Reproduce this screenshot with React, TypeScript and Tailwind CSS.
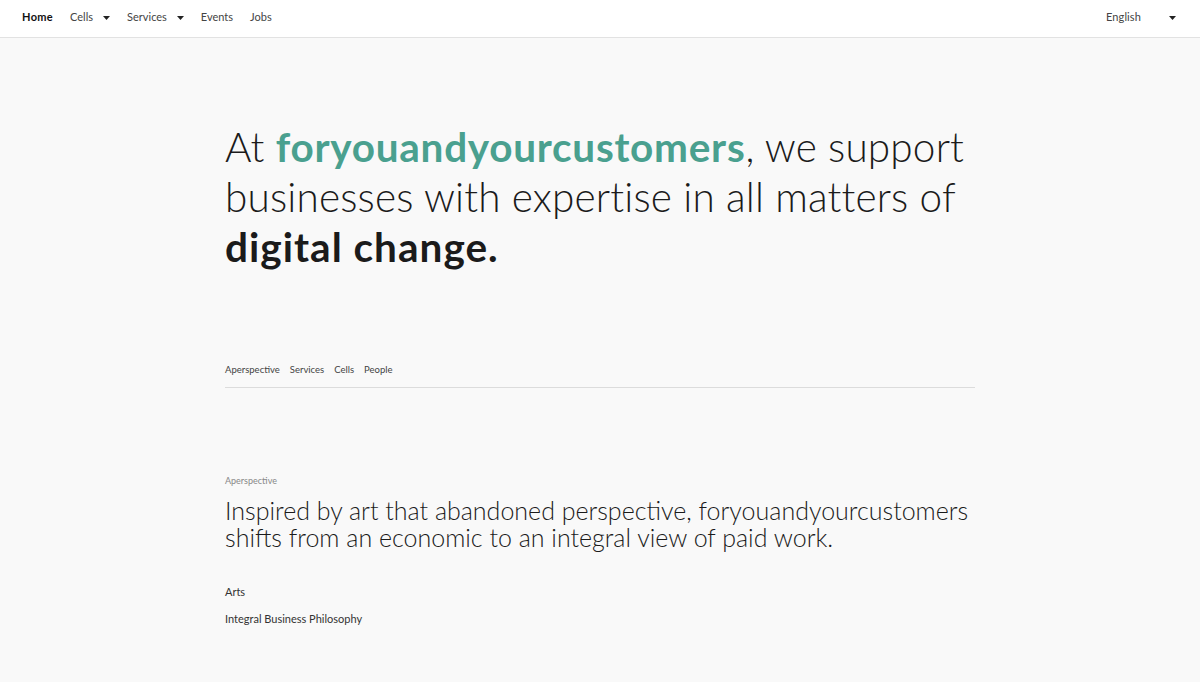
import React from 'react';

const navItems = [
  { label: 'Home', active: true, caret: false },
  { label: 'Cells', active: false, caret: true },
  { label: 'Services', active: false, caret: true },
  { label: 'Events', active: false, caret: false },
  { label: 'Jobs', active: false, caret: false },
];

const tabs = ['Aperspective', 'Services', 'Cells', 'People'];

const Caret: React.FC<{ className?: string }> = ({ className = '' }) => (
  <svg width="7" height="4" viewBox="0 0 7 4" className={`fill-[#222] ${className}`}>
    <path d="M0 0h7L3.5 4z" />
  </svg>
);

export default function App() {
  return (
    <div className="min-h-screen bg-[#f9f9f9] font-['Lato',sans-serif] text-[#1b1b1b]">
      {/* Top navigation */}
      <header className="h-[38px] bg-white border-b border-[#e2e2e2] flex items-center justify-between pl-[22px] pr-[24px]">
        <nav className="flex items-center gap-[17px] text-[11px] -mt-[2px]">
          {navItems.map(item => (
            <a
              key={item.label}
              className={`flex items-center ${item.active ? 'font-bold text-[#111] tracking-[0.03em]' : 'text-[#444]'}`}
            >
              {item.label}
              {item.caret && <Caret className="ml-[10px]" />}
            </a>
          ))}
        </nav>
        <div className="flex items-center text-[11px] text-[#444] -mt-[2px]">
          <span className="tracking-[0.01em]">English</span>
          <Caret className="ml-[28px]" />
        </div>
      </header>

      <main className="w-[750px] mx-auto">
        {/* Hero */}
        <h1 className="pt-[84px] text-[40.5px] leading-[50px] font-light tracking-[0.004em]">
          At <span className="font-bold text-[#4aa08f] tracking-[0.018em]">foryouandyourcustomers</span>, we support
          businesses with expertise in all matters of{' '}
          <span className="font-bold tracking-[0.025em]">digital change.</span>
        </h1>

        {/* Section tabs */}
        <div className="mt-[91px] flex gap-[10px] text-[9.5px] text-[#444] pb-[10px] border-b border-[#dcdcdc]">
          {tabs.map(t => (
            <span key={t}>{t}</span>
          ))}
        </div>

        {/* Aperspective */}
        <section className="pt-[86px] pb-[50px]">
          <p className="text-[9px] text-[#888]">Aperspective</p>
          <p className="mt-[9px] text-[25px] leading-[27px] font-light text-[#1b1b1b]">
            Inspired by art that abandoned perspective, foryouandyourcustomers shifts from an
            economic to an integral view of paid work.
          </p>
          <p className="mt-[33px] text-[11px] text-[#333]">Arts</p>
          <p className="mt-[11px] text-[11px] text-[#333]">Integral Business Philosophy</p>
        </section>
      </main>
    </div>
  );
}
